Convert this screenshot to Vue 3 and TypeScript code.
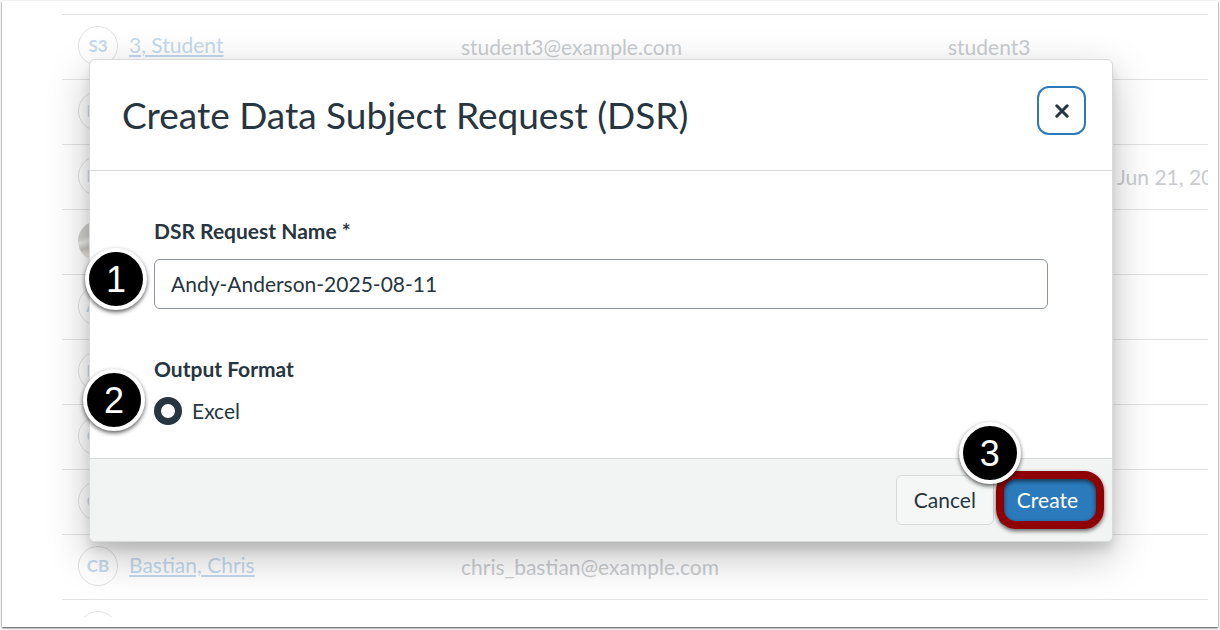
<script setup lang="ts">
import { ref } from 'vue'

interface Person {
  initials: string
  name?: string
  email?: string
  login?: string
  seen?: string
  photo?: boolean
}

const people: Person[] = [
  { initials: 'S3', name: '3, Student', email: 'student3@example.com', login: 'student3' },
  { initials: 'EH' },
  { initials: 'EH', seen: 'Jun 21, 2025' },
  { initials: '', photo: true },
  { initials: 'AA' },
  { initials: 'EH' },
  { initials: 'CB' },
  { initials: 'CB' },
  { initials: 'CB', name: 'Bastian, Chris', email: 'chris_bastian@example.com' },
  { initials: '' },
]

const requestName = ref('Andy-Anderson-2025-08-11')
const format = ref('excel')
</script>

<template>
  <div class="page">
    <div class="frame">
      <div class="list">
        <table class="people">
          <colgroup>
            <col class="col-name" />
            <col class="col-email" />
            <col class="col-login" />
            <col />
          </colgroup>
          <tbody>
            <tr v-for="(p, i) in people" :key="i">
              <td>
                <div class="person">
                  <span class="avatar" :class="{ photo: p.photo }">{{ p.initials }}</span>
                  <a v-if="p.name" href="#">{{ p.name }}</a>
                </div>
              </td>
              <td>{{ p.email }}</td>
              <td>{{ p.login }}</td>
              <td>{{ p.seen }}</td>
            </tr>
          </tbody>
        </table>
      </div>
    </div>

    <div class="overlay">
      <form class="modal" role="dialog" aria-labelledby="dsr-title" @submit.prevent>
        <header class="head">
          <h2 id="dsr-title">Create Data Subject Request (DSR)</h2>
          <button type="button" class="close" aria-label="Close">
            <svg viewBox="0 0 14 14" width="14" height="14" aria-hidden="true">
              <path d="M1.8 1.8 L12.2 12.2 M12.2 1.8 L1.8 12.2" fill="none" stroke="#273540" stroke-width="3" stroke-linecap="round" />
            </svg>
          </button>
        </header>

        <div class="body">
          <div class="field">
            <label class="label" for="dsr-name">DSR Request Name *</label>
            <input id="dsr-name" v-model="requestName" class="text" type="text" />
            <span class="badge one">1</span>
          </div>
          <fieldset class="field">
            <legend class="label">Output Format</legend>
            <label class="option">
              <input v-model="format" type="radio" name="format" value="excel" />
              <span>Excel</span>
            </label>
            <span class="badge two">2</span>
          </fieldset>
        </div>

        <footer class="foot">
          <button type="button" class="btn">Cancel</button>
          <div class="target">
            <button type="submit" class="btn primary">Create</button>
            <span class="highlight"></span>
            <span class="badge three">3</span>
          </div>
        </footer>
      </form>
    </div>
  </div>
</template>

<style>
body {
  margin: 0;
  background: #fff;
}
</style>

<style scoped>
.page {
  position: relative;
  box-sizing: border-box;
  height: 100vh;
  padding: 1px 2px 3px;
  overflow: hidden;
  font-family: Lato, 'Liberation Sans', sans-serif;
  font-size: 21px;
  line-height: 28px;
  color: #273540;
}
.page *,
.page *::before {
  box-sizing: border-box;
}
.frame {
  height: 100%;
  padding: 13px 10px 10px 60px;
  background: #fff;
  box-shadow: 0 1px 2px rgba(0, 0, 0, 0.75);
}
.list {
  height: 100%;
  overflow: hidden;
}
.people {
  width: 100%;
  table-layout: fixed;
  border-spacing: 0;
  color: #c9cccf;
}
.col-name {
  width: 383px;
}
.col-email {
  width: 487px;
}
.col-login {
  width: 169px;
}
.people td {
  height: 65px;
  padding: 0 0 0 16px;
  border-top: 1px solid #e0e2e4;
  white-space: nowrap;
  overflow: hidden;
}
.person {
  display: flex;
  align-items: center;
  gap: 11px;
  padding-bottom: 2px;
}
.avatar {
  display: flex;
  align-items: center;
  justify-content: center;
  width: 40px;
  height: 40px;
  border: 1px solid #e0e1e2;
  border-radius: 50%;
  font-size: 17px;
  font-weight: 700;
  color: #c5daee;
}
.avatar.photo {
  border: 0;
  background: linear-gradient(165deg, #cfcfcd 0 35%, #e8e8e6 45%, #c6c5c2 58%, #e9e2da 70%);
}
.person a {
  padding-bottom: 2px;
  color: #c5d9ed;
  text-decoration-thickness: 2px;
  text-underline-offset: 2px;
}
.overlay {
  position: absolute;
  inset: 0;
  padding: 59px 107px 0 89px;
}
.modal {
  border: 1px solid #d7dadc;
  border-radius: 6px;
  background: #fff;
  box-shadow: 0 8px 10px rgba(0, 0, 0, 0.1), 0 14px 40px rgba(0, 0, 0, 0.25);
}
.head {
  display: flex;
  align-items: flex-start;
  justify-content: space-between;
  padding: 26px 26px 31px 32px;
  border-bottom: 1px solid #d7dadc;
}
h2 {
  margin: 0;
  padding-top: 5px;
  font-size: 37px;
  font-weight: 400;
  line-height: 48px;
}
.close {
  display: flex;
  align-items: center;
  justify-content: center;
  width: 49px;
  height: 49px;
  padding: 0;
  border: 2px solid #2b7abc;
  border-radius: 12px;
  background: #fff;
}
.body {
  display: flex;
  flex-direction: column;
  gap: 46px;
  padding: 46px 64px 33px;
}
.field {
  position: relative;
  min-width: 0;
  margin: 0;
  padding: 0;
  border: 0;
}
.label {
  display: block;
  padding: 0;
  font-weight: 700;
}
.text {
  display: block;
  width: 100%;
  height: 50px;
  margin-top: 14px;
  padding: 0 16px 2px;
  border: 1px solid #8d959f;
  border-radius: 6px;
  background: #fff;
  font: inherit;
  color: inherit;
  outline: none;
}
.option {
  display: flex;
  align-items: center;
  gap: 10px;
  margin-top: 14px;
}
.option input {
  appearance: none;
  width: 28px;
  height: 28px;
  margin: 0;
  border: 7px solid #273540;
  border-radius: 50%;
  background: #fff;
}
.foot {
  display: flex;
  justify-content: flex-end;
  gap: 5px;
  padding: 16px;
  border-top: 1px solid #d7dadc;
  border-radius: 0 0 5px 5px;
  background: #f2f4f4;
}
.btn {
  height: 50px;
  padding: 0 17px;
  border: 1px solid #d7dadc;
  border-radius: 6px;
  background: #f5f6f6;
  font: inherit;
  color: inherit;
}
.btn.primary {
  border-color: #2b7abc;
  background: #2b7abc;
  color: #fff;
}
.target {
  position: relative;
}
.highlight {
  position: absolute;
  inset: -4px -8px -4px -3px;
  border: 8px solid #8f0000;
  border-radius: 20px;
  box-shadow: 0 2px 4px rgba(0, 0, 0, 0.6), inset 0 2px 4px rgba(0, 0, 0, 0.6);
}
.badge {
  position: absolute;
  width: 62px;
  height: 62px;
  border: 4px solid #fff;
  border-radius: 50%;
  background: #000;
  box-shadow: 0 2px 4px rgba(0, 0, 0, 0.65);
  font: 36px/56px 'Liberation Sans', sans-serif;
  text-align: center;
  color: #fff;
}
.one {
  top: 31px;
  left: -69px;
}
.two {
  top: -14px;
  left: -71px;
}
.three {
  top: -53px;
  left: -40px;
}
</style>
